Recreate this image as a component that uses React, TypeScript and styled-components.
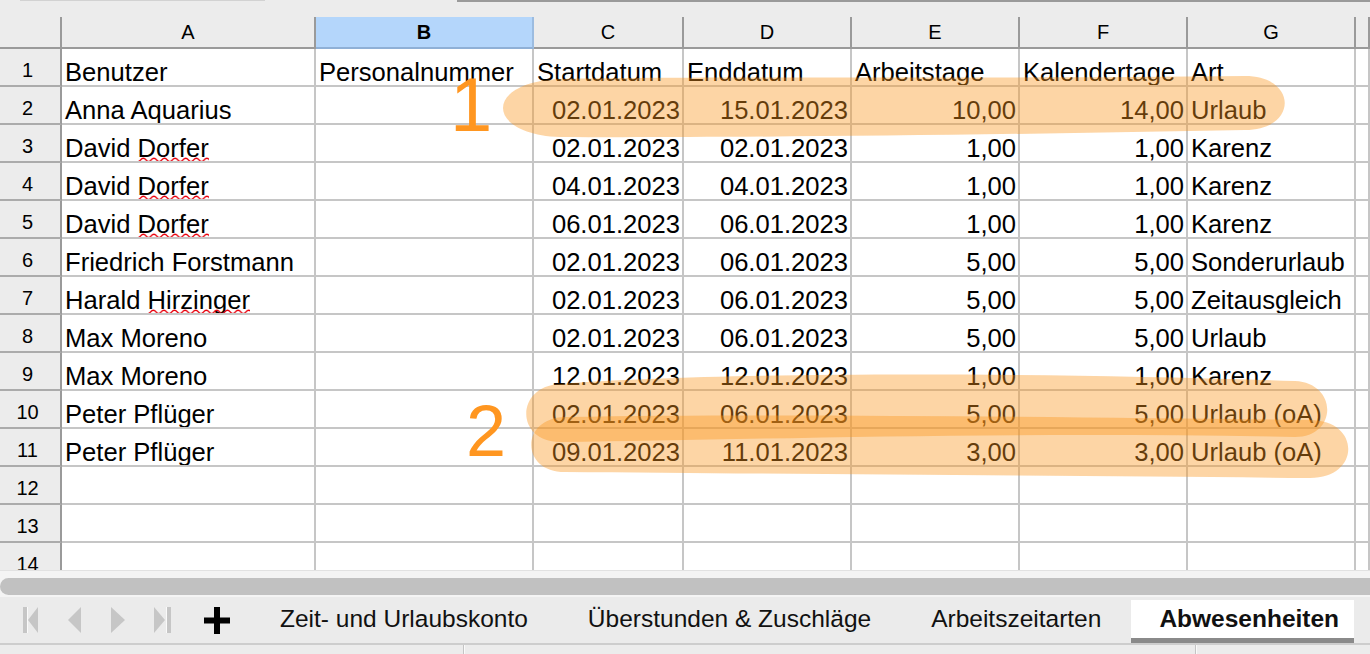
import React from 'react';
import styled, { createGlobalStyle } from 'styled-components';

const GlobalStyle = createGlobalStyle`
  html, body { margin: 0; padding: 0; background: #ececec; }
  body {
    font-family: "Liberation Sans", Arial, sans-serif;
    width: 1370px;
    height: 654px;
    overflow: hidden;
    color: #000;
  }
  * { box-sizing: border-box; }
`;

const Page = styled.div`
  position: relative;
  width: 1370px;
  height: 654px;
  display: flex;
  flex-direction: column;
  overflow: hidden;
  background: #ececec;
`;

const TopStrip = styled.div`
  height: 17px;
  flex: none;
  display: flex;
  align-items: flex-start;
  padding-left: 20px;
  background: #ececec;
`;

const LightLine = styled.div`
  width: 245px;
  height: 1px;
  background: #d2d2d2;
  margin-right: 192px;
`;

const DarkLine = styled.div`
  flex: 1;
  height: 2px;
  background: #9a9a9a;
`;

const Grid = styled.div`
  flex: none;
  display: grid;
  grid-template-columns: 62px 254px 218px 150px 168px 168px 168px 168px 1fr;
  grid-template-rows: 32px;
  grid-auto-rows: 38px;
  height: 553px;
  overflow: hidden;
  background: #fff;
`;

const ColHeader = styled.div<{ $selected?: boolean }>`
  display: flex;
  align-items: center;
  justify-content: center;
  background: ${(p) => (p.$selected ? '#b4d6fb' : '#ececec')};
  border-right: 2px solid ${(p) => (p.$selected ? '#9cbce0' : '#9a9a9a')};
  border-bottom: 2px solid ${(p) => (p.$selected ? '#8fb0d6' : '#9a9a9a')};
  font-size: 20px;
  font-weight: ${(p) => (p.$selected ? 700 : 400)};
  color: #000;
`;

const RowHeader = styled.div`
  display: flex;
  align-items: center;
  justify-content: center;
  padding: 6px 5px 0 0;
  background: #ececec;
  border-right: 2px solid #9a9a9a;
  border-bottom: 2px solid #ababab;
  font-size: 20px;
`;

const Cell = styled.div<{ $align?: 'left' | 'right' }>`
  display: flex;
  align-items: flex-end;
  justify-content: ${(p) => (p.$align === 'right' ? 'flex-end' : 'flex-start')};
  padding: 0 2px 0 3px;
  border-right: 2px solid #c6c6c6;
  border-bottom: 2px solid #c6c6c6;
  font-size: 25.6px;
  line-height: 26px;
  white-space: nowrap;
  overflow: hidden;
`;

const CellText = styled.span`
  white-space: pre;
`;

const Misspelled = styled.span`
  position: relative;
  display: inline-block;
`;

const Squiggle = styled.svg`
  position: absolute;
  left: 0;
  top: calc(100% - 4.5px);
  width: 100%;
  height: 6px;
  overflow: hidden;
`;

const ScrollArea = styled.div`
  flex: none;
  height: 27px;
  padding: 7px 0 3px;
  background: #f4f4f4;
  border-top: 1px solid #e2e2e2;
`;

const Thumb = styled.div`
  height: 17px;
  background: #c1c1c1;
  border-radius: 9px 0 0 9px;
`;

const TabBar = styled.div`
  flex: none;
  height: 48px;
  display: flex;
  align-items: flex-end;
  padding-left: 8px;
  background: #ebebeb;
  border-bottom: 2px solid #cdcdcd;
`;

const NavButton = styled.div`
  width: 44px;
  align-self: center;
  display: flex;
  justify-content: center;
  align-items: center;
  height: 26px;
`;

const AddButton = styled.div`
  width: 66px;
  align-self: center;
  display: flex;
  justify-content: center;
  align-items: center;
  height: 27px;
`;

const Tab = styled.div<{ $active?: boolean }>`
  height: 43px;
  display: flex;
  align-items: center;
  padding: ${(p) => (p.$active ? '0 15px 0 28px' : '0 30px')};
  font-size: 24.5px;
  font-weight: ${(p) => (p.$active ? 700 : 400)};
  color: #111;
  background: ${(p) => (p.$active ? '#fff' : 'transparent')};
  border-bottom: 5px solid ${(p) => (p.$active ? '#8a8a8a' : 'transparent')};
  white-space: nowrap;
`;

const StatusBar = styled.div`
  flex: none;
  height: 9px;
  display: grid;
  grid-template-columns: 463px 732px 1fr;
  background: #ececec;
`;

const StatusSegment = styled.div<{ $sep?: boolean }>`
  border-left: ${(p) => (p.$sep ? '1px solid #c4c4c4' : 'none')};
  box-shadow: ${(p) => (p.$sep ? 'inset 1px 0 #fafafa' : 'none')};
`;

const Overlay = styled.svg`
  position: absolute;
  left: 0;
  top: 0;
  pointer-events: none;
`;

const Callout = styled.div<{ $size: number }>`
  position: absolute;
  font-family: "Liberation Sans", Arial, sans-serif;
  font-size: ${(p) => p.$size}px;
  line-height: 1;
  color: #ff9620;
  pointer-events: none;
`;

const COLS = ['A', 'B', 'C', 'D', 'E', 'F', 'G', ''];

type Row = string[];
const ROWS: Row[] = [
  ['Benutzer', 'Personalnummer', 'Startdatum', 'Enddatum', 'Arbeitstage', 'Kalendertage', 'Art'],
  ['Anna Aquarius', '', '02.01.2023', '15.01.2023', '10,00', '14,00', 'Urlaub'],
  ['David Dorfer', '', '02.01.2023', '02.01.2023', '1,00', '1,00', 'Karenz'],
  ['David Dorfer', '', '04.01.2023', '04.01.2023', '1,00', '1,00', 'Karenz'],
  ['David Dorfer', '', '06.01.2023', '06.01.2023', '1,00', '1,00', 'Karenz'],
  ['Friedrich Forstmann', '', '02.01.2023', '06.01.2023', '5,00', '5,00', 'Sonderurlaub'],
  ['Harald Hirzinger', '', '02.01.2023', '06.01.2023', '5,00', '5,00', 'Zeitausgleich'],
  ['Max Moreno', '', '02.01.2023', '06.01.2023', '5,00', '5,00', 'Urlaub'],
  ['Max Moreno', '', '12.01.2023', '12.01.2023', '1,00', '1,00', 'Karenz'],
  ['Peter Pflüger', '', '02.01.2023', '06.01.2023', '5,00', '5,00', 'Urlaub (oA)'],
  ['Peter Pflüger', '', '09.01.2023', '11.01.2023', '3,00', '3,00', 'Urlaub (oA)'],
  ['', '', '', '', '', '', ''],
  ['', '', '', '', '', '', ''],
  ['', '', '', '', '', '', ''],
];

const MISSPELLED = ['Dorfer', 'Hirzinger'];

let squiggleId = 0;

function Wave() {
  const id = React.useMemo(() => `wave${squiggleId++}`, []);
  return (
    <Squiggle preserveAspectRatio="none">
      <defs>
        <pattern id={id} patternUnits="userSpaceOnUse" width="10.6" height="6">
          <path
            d="M0 4.6 C2.65 4.6 2.65 1.2 5.3 1.2 C7.95 1.2 7.95 4.6 10.6 4.6"
            fill="none"
            stroke="#e8000b"
            strokeWidth="1.4"
          />
        </pattern>
      </defs>
      <rect x="0" y="0" width="100%" height="6" fill={`url(#${id})`} />
    </Squiggle>
  );
}

function renderText(t: string) {
  if (!t) return null;
  const w = MISSPELLED.find((m) => t.includes(m));
  if (!w) return <CellText>{t}</CellText>;
  const [a, b] = t.split(w);
  return (
    <CellText>
      {a}
      <Misspelled>
        {w}
        <Wave />
      </Misspelled>
      {b}
    </CellText>
  );
}

const TABS = ['Zeit- und Urlaubskonto', 'Überstunden & Zuschläge', 'Arbeitszeitarten', 'Abwesenheiten'];

const NAV_GRAY = '#c6c6c6';

function FirstIcon() {
  return (
    <svg width="15" height="26" viewBox="0 0 15 26">
      <rect x="0" y="0" width="4" height="26" fill={NAV_GRAY} />
      <rect x="4" y="0" width="1" height="26" fill="#fafafa" />
      <polygon points="15,0 15,26 5,13" fill={NAV_GRAY} />
    </svg>
  );
}
function PrevIcon() {
  return (
    <svg width="13" height="26" viewBox="0 0 13 26">
      <polygon points="13,0 13,26 0,13" fill={NAV_GRAY} />
    </svg>
  );
}
function NextIcon() {
  return (
    <svg width="14" height="26" viewBox="0 0 14 26">
      <polygon points="0,0 0,26 14,13" fill={NAV_GRAY} />
    </svg>
  );
}
function LastIcon() {
  return (
    <svg width="17" height="26" viewBox="0 0 17 26">
      <polygon points="0,0 0,26 11,13" fill={NAV_GRAY} />
      <rect x="12" y="0" width="1" height="26" fill="#fafafa" />
      <rect x="13" y="0" width="4" height="26" fill={NAV_GRAY} />
    </svg>
  );
}
function PlusIcon() {
  return (
    <svg width="26" height="27" viewBox="0 0 26 27">
      <rect x="0" y="10.5" width="26" height="6" fill="#000" />
      <rect x="10" y="0" width="6" height="27" fill="#000" />
    </svg>
  );
}

const HL = 'rgba(250,150,30,0.4)';

export default function App() {
  return (
    <>
      <GlobalStyle />
      <Page>
        <TopStrip>
          <LightLine />
          <DarkLine />
        </TopStrip>
        <Grid>
          <ColHeader />
          {COLS.map((c, i) => (
            <ColHeader key={i} $selected={c === 'B'}>
              {c}
            </ColHeader>
          ))}
          {ROWS.map((row, r) => (
            <React.Fragment key={r}>
              <RowHeader>{r + 1}</RowHeader>
              {row.map((v, c) => (
                <Cell key={c} $align={r > 0 && c >= 2 && c <= 5 ? 'right' : 'left'}>
                  {renderText(v)}
                </Cell>
              ))}
              <Cell />
            </React.Fragment>
          ))}
        </Grid>
        <ScrollArea>
          <Thumb />
        </ScrollArea>
        <TabBar>
          <NavButton>
            <FirstIcon />
          </NavButton>
          <NavButton>
            <PrevIcon />
          </NavButton>
          <NavButton>
            <NextIcon />
          </NavButton>
          <NavButton>
            <LastIcon />
          </NavButton>
          <AddButton>
            <PlusIcon />
          </AddButton>
          {TABS.map((t, i) => (
            <Tab key={t} $active={i === TABS.length - 1}>
              {t}
            </Tab>
          ))}
        </TabBar>
        <StatusBar>
          <StatusSegment />
          <StatusSegment $sep />
          <StatusSegment $sep />
        </StatusBar>

        <Overlay width="1370" height="654" viewBox="0 0 1370 654">
          <path
            d="M 560 79 C 700 76, 1000 79, 1245 76 C 1298 76, 1298 130, 1245 130 C 1000 135, 700 138, 560 137 C 484 134, 484 82, 560 79 Z"
            fill={HL}
          />
          <path
            d="M 560 384 C 700 373, 1000 371, 1295 381 C 1338 383, 1338 437, 1295 437 C 1000 431, 750 440, 560 442 C 515 442, 515 386, 560 384 Z"
            fill={HL}
          />
          <path
            d="M 565 417 C 800 413, 1100 418, 1310 420 C 1361 420, 1361 478, 1310 478 C 1100 476, 800 474, 565 472 C 520 472, 520 418, 565 417 Z"
            fill={HL}
          />
        </Overlay>
        <Callout $size={76} style={{ left: 450, top: 67 }}>
          1
        </Callout>
        <Callout $size={72} style={{ left: 466, top: 395 }}>
          2
        </Callout>
      </Page>
    </>
  );
}
